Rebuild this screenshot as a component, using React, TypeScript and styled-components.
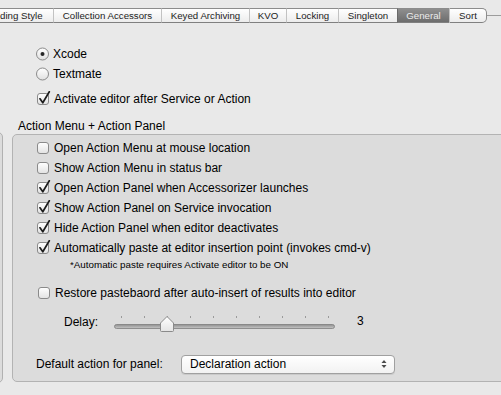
import React from 'react';
import styled, { createGlobalStyle } from 'styled-components';

const GlobalStyle = createGlobalStyle`
  html, body {
    margin: 0;
    padding: 0;
    background: #e9e9e9;
    overflow: hidden;
  }
  body {
    font-family: "Liberation Sans", Arial, sans-serif;
    font-size: 12px;
    color: #000;
  }
`;

const Window = styled.div`
  width: 501px;
  height: 395px;
  box-sizing: border-box;
  padding-top: 8px;
  overflow: hidden;
  display: flex;
  flex-direction: column;
`;

const HeaderRow = styled.div`
  display: flex;
  align-items: center;
  height: 15px;
  flex-shrink: 0;
`;

const TabStrip = styled.div`
  display: flex;
  height: 15px;
`;

const Tab = styled.div<{ $w: number; $active?: boolean; $first?: boolean; $last?: boolean }>`
  width: ${p => p.$w}px;
  box-sizing: border-box;
  height: 15px;
  line-height: 13px;
  font-size: 9.7px;
  white-space: nowrap;
  overflow: hidden;
  text-align: ${p => (p.$first ? 'left' : 'center')};
  color: ${p => (p.$active ? '#ececec' : '#1c1c1c')};
  background: ${p =>
    p.$active ? 'linear-gradient(#8e8e8e, #6d6d6d)' : 'linear-gradient(#ffffff, #ececec)'};
  border-top: 1px solid #8c8c8c;
  border-bottom: 1px solid #808080;
  border-left: ${p => (p.$first ? 'none' : p.$active ? '1px solid #6a6a6a' : '1px solid #c2c2c2')};
  border-right: ${p => (p.$last ? '1px solid #8c8c8c' : 'none')};
  border-radius: ${p => (p.$last ? '0 5px 5px 0' : '0')};
`;

const TabLine = styled.div`
  flex: 1;
  height: 1px;
  background: #9c9c9c;
`;

const Body = styled.div`
  flex: 1;
  display: flex;
`;

const SidePanel = styled.div`
  width: 13px;
  height: 251px;
  margin: 109px 0 0 -10px;
  box-sizing: border-box;
  border: 1px solid #b1b1b1;
  border-radius: 5px;
  background: #dcdcdc;
  flex-shrink: 0;
`;

const MainColumn = styled.div`
  flex: 1;
  display: flex;
  flex-direction: column;
  padding-bottom: 13px;
`;

const Options = styled.div`
  margin-top: 21px;
  display: flex;
  flex-direction: column;
`;

const Row = styled.div<{ $indent: number; $gap?: number }>`
  display: flex;
  align-items: center;
  height: 20px;
  padding-left: ${p => p.$indent}px;
  margin-top: ${p => p.$gap ?? 0}px;
  white-space: nowrap;
`;

const Slot = styled.span`
  width: 17px;
  flex-shrink: 0;
  display: flex;
  align-items: center;
`;

const GroupTitle = styled.div`
  margin: 10px 0 0 15px;
  height: 14px;
  line-height: 14px;
`;

const GroupBox = styled.div`
  flex: 1;
  margin: 1px -10px 0 9px;
  padding-top: 3px;
  box-sizing: border-box;
  border: 1px solid #b3b3b3;
  border-radius: 5px;
  background: #dcdcdc;
  display: flex;
  flex-direction: column;
`;

const Note = styled.div`
  height: 12px;
  line-height: 12px;
  font-size: 9.8px;
  padding-left: 57px;
  margin-top: 1px;
  white-space: nowrap;
`;

const DelayRow = styled.div`
  display: flex;
  align-items: center;
  height: 24px;
  margin-top: 7px;
  padding-left: 51px;
`;

const DelayLabel = styled.span`
  width: 50px;
  flex-shrink: 0;
`;

const DelayValue = styled.span`
  margin-left: 21px;
  margin-top: -3px;
`;

const FieldLabel = styled.span`
  width: 145px;
  flex-shrink: 0;
`;

const Popup = styled.div`
  width: 214px;
  height: 19px;
  box-sizing: border-box;
  border: 1px solid #a0a0a0;
  border-radius: 4px;
  background: linear-gradient(#ffffff, #f2f2f2);
  box-shadow: 0 1px 0 rgba(0, 0, 0, 0.08);
  display: flex;
  align-items: center;
  justify-content: space-between;
  padding: 0 7px 0 8px;
`;

const CheckBox = ({ checked }: { checked?: boolean }) => (
  <svg width="15" height="16" viewBox="0 0 15 16">
    <defs>
      <linearGradient id="cbfill" x1="0" y1="0" x2="0" y2="1">
        <stop offset="0" stopColor="#ffffff" />
        <stop offset="1" stopColor="#e2e2e2" />
      </linearGradient>
    </defs>
    <rect x="0.5" y="2.5" width="11" height="11" rx="2.5" fill="url(#cbfill)" stroke="#8a8a8a" />
    {checked && (
      <path
        d="M3 7.8 L5.8 11.8 L12.3 0.8"
        fill="none"
        stroke="#1c1c1c"
        strokeWidth="1.7"
        strokeLinecap="round"
        strokeLinejoin="round"
      />
    )}
  </svg>
);

const Radio = ({ checked }: { checked?: boolean }) => (
  <svg width="14" height="14" viewBox="0 0 14 14">
    <defs>
      <linearGradient id="rbfill" x1="0" y1="0" x2="0" y2="1">
        <stop offset="0" stopColor="#ffffff" />
        <stop offset="1" stopColor="#e0e0e0" />
      </linearGradient>
    </defs>
    <circle cx="6.5" cy="7" r="6" fill="url(#rbfill)" stroke="#8a8a8a" />
    {checked && <circle cx="6.5" cy="7" r="2" fill="#262626" />}
  </svg>
);

const Slider = ({ ticks, pos }: { ticks: number; pos: number }) => {
  const tx = (i: number) => 7 + i * 23;
  const kx = tx(pos);
  return (
    <svg width="222" height="24" viewBox="0 0 222 24">
      <defs>
        <linearGradient id="track" x1="0" y1="0" x2="0" y2="1">
          <stop offset="0" stopColor="#8e8e8e" />
          <stop offset="1" stopColor="#c9c9c9" />
        </linearGradient>
        <linearGradient id="knob" x1="0" y1="0" x2="0" y2="1">
          <stop offset="0" stopColor="#ffffff" />
          <stop offset="1" stopColor="#e4e4e4" />
        </linearGradient>
      </defs>
      {Array.from({ length: ticks }).map((_, i) => (
        <rect key={i} x={tx(i)} y="6" width="1" height="2" fill="#9a9a9a" />
      ))}
      <rect x="0.5" y="14.5" width="220" height="4" rx="2" fill="url(#track)" stroke="#7d7d7d" strokeWidth="0.8" />
      <path
        d={`M${kx - 6.5} 20.5 L${kx - 6.5} 13 L${kx} 6.5 L${kx + 6.5} 13 L${kx + 6.5} 20.5 Q${kx + 6.5} 21.5 ${kx + 5.5} 21.5 L${kx - 5.5} 21.5 Q${kx - 6.5} 21.5 ${kx - 6.5} 20.5 Z`}
        fill="url(#knob)"
        stroke="#8a8a8a"
      />
    </svg>
  );
};

const PopupArrows = () => (
  <svg width="6" height="10" viewBox="0 0 6 10">
    <path d="M3 1 L5.5 4 L0.5 4 Z" fill="#4a4a4a" />
    <path d="M3 9 L5.5 6 L0.5 6 Z" fill="#4a4a4a" />
  </svg>
);

const tabs = [
  { label: 'ding Style', w: 53 },
  { label: 'Collection Accessors', w: 108 },
  { label: 'Keyed Archiving', w: 88 },
  { label: 'KVO', w: 37 },
  { label: 'Locking', w: 52 },
  { label: 'Singleton', w: 59 },
  { label: 'General', w: 52 },
  { label: 'Sort', w: 38 },
];

const panelOptions = [
  { label: 'Open Action Menu at mouse location', checked: false },
  { label: 'Show Action Menu in status bar', checked: false },
  { label: 'Open Action Panel when Accessorizer launches', checked: true },
  { label: 'Show Action Panel on Service invocation', checked: true },
  { label: 'Hide Action Panel when editor deactivates', checked: true },
  { label: 'Automatically paste at editor insertion point (invokes cmd-v)', checked: true },
];

const App: React.FC = () => {
  return (
    <Window>
      <GlobalStyle />
      <HeaderRow>
        <TabStrip>
          {tabs.map((t, i) => (
            <Tab
              key={t.label}
              $w={t.w}
              $first={i === 0}
              $last={i === tabs.length - 1}
              $active={t.label === 'General'}
            >
              {t.label}
            </Tab>
          ))}
        </TabStrip>
        <TabLine />
      </HeaderRow>
      <Body>
        <SidePanel />
        <MainColumn>
          <Options>
            <Row $indent={33}>
              <Slot><Radio checked /></Slot>
              Xcode
            </Row>
            <Row $indent={33}>
              <Slot><Radio /></Slot>
              Textmate
            </Row>
            <Row $indent={34} $gap={5}>
              <Slot><CheckBox checked /></Slot>
              Activate editor after Service or Action
            </Row>
          </Options>
          <GroupTitle>Action Menu + Action Panel</GroupTitle>
          <GroupBox>
            {panelOptions.map(o => (
              <Row key={o.label} $indent={24}>
                <Slot><CheckBox checked={o.checked} /></Slot>
                {o.label}
              </Row>
            ))}
            <Note>*Automatic paste requires Activate editor to be ON</Note>
            <Row $indent={25} $gap={12}>
              <Slot><CheckBox /></Slot>
              Restore pastebaord after auto-insert of results into editor
            </Row>
            <DelayRow>
              <DelayLabel>Delay:</DelayLabel>
              <Slider ticks={10} pos={2} />
              <DelayValue>3</DelayValue>
            </DelayRow>
            <Row $indent={23} $gap={20}>
              <FieldLabel>Default action for panel:</FieldLabel>
              <Popup>
                <span>Declaration action</span>
                <PopupArrows />
              </Popup>
            </Row>
          </GroupBox>
        </MainColumn>
      </Body>
    </Window>
  );
};

export default App;
